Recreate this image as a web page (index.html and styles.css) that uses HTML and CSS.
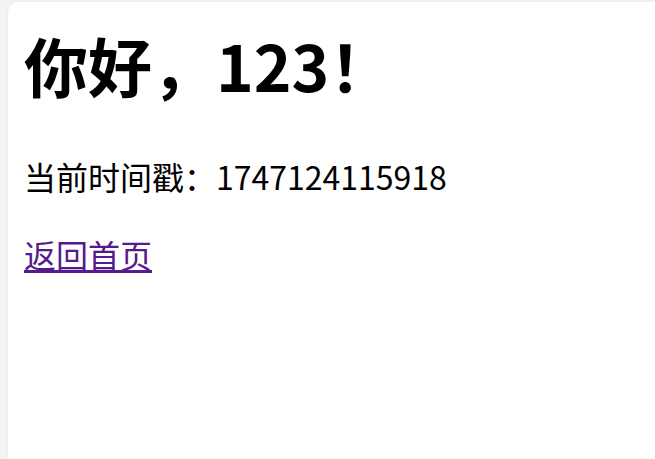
FILE: index.html
```html
<!DOCTYPE html>
<html lang="zh-CN">
<head>
<meta charset="utf-8">
<title>你好</title>
<link rel="stylesheet" href="styles.css">
</head>
<body>
<div class="card">
  <h1 class="title">你好，123！</h1>
  <p class="stamp">当前时间戳：1747124115918</p>
  <a class="back" href="#">返回首页</a>
</div>
</body>
</html>
```

FILE: styles.css
```css
html, body {
  margin: 0;
  height: 100%;
}
body {
  background: #f3f3f3;
  font-family: "Noto Sans CJK SC", "Noto Sans", sans-serif;
  font-size: 32px;
  color: #000;
  overflow: hidden;
  padding: 2px 0 0 8px;
  box-sizing: border-box;
}
.card {
  background: #fff;
  border-top-left-radius: 10px;
  box-shadow: 0 0 2px rgba(0,0,0,0.08);
  height: 100%;
  padding: 16px 16px 0 16px;
  box-sizing: border-box;
}
.title {
  font-size: 64px;
  font-weight: 700;
  margin: 0 0 43px 0;
}
.stamp {
  margin: 0 0 32px 0;
}
.back {
  color: #551a8b;
  text-decoration: underline;
}
```
